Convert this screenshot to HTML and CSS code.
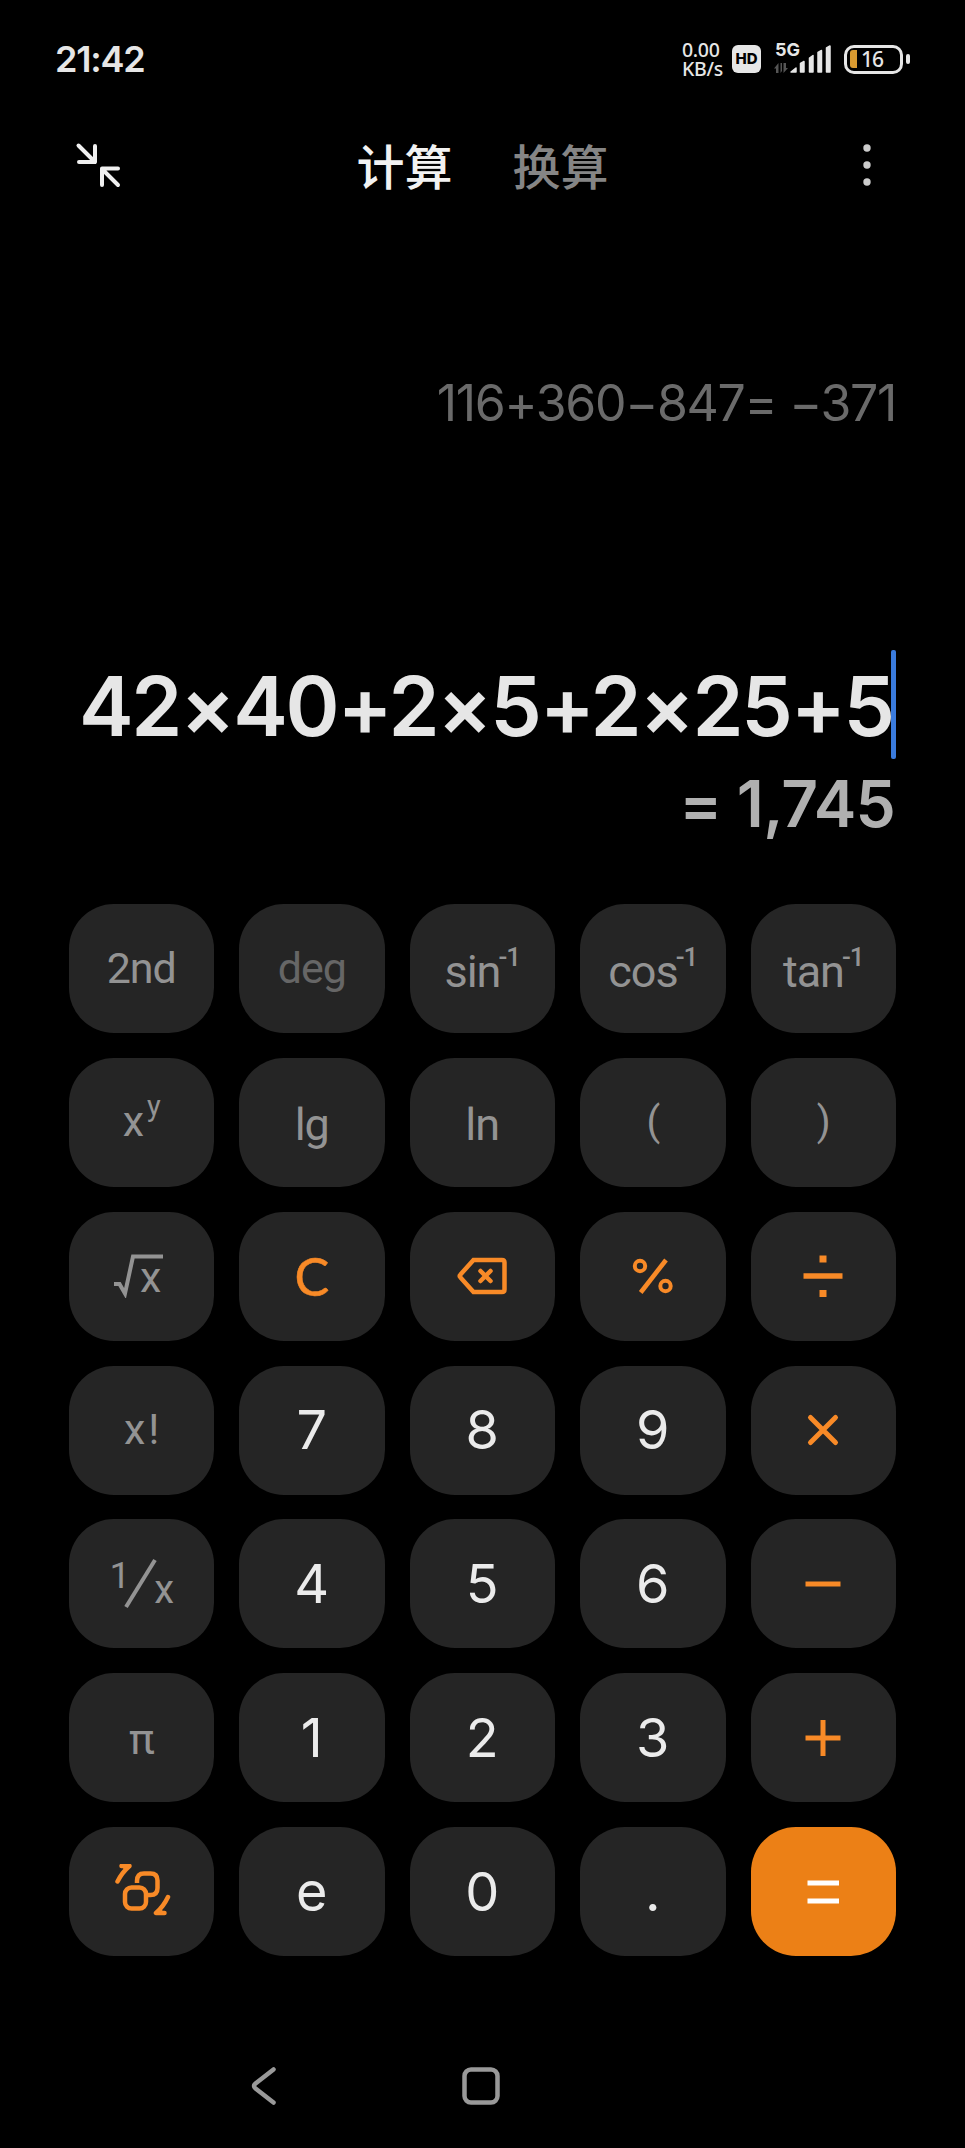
FILE: index.html
```
<!DOCTYPE html>
<html lang="zh-CN">
<head>
    <meta charset="UTF-8">
    <meta name="viewport" content="width=device-width, initial-scale=1.0">
    <title>计算器</title>
    <link rel="stylesheet" href="styles.css">
</head>
<body>
    <div class="status-bar">
        <span class="clock">21:42</span>
        <div class="status-icons">
            <div class="net-speed"><span>0.00</span><span>KB/s</span></div>
            <div class="hd">HD</div>
            <div class="signal">
                <span class="signal-type">5G</span>
                <svg width="60" height="32" viewBox="0 0 60 32">
                    <path d="M4.500 30V20L0 25.500H2V30ZM6.500 20V30L8 28V20ZM9.500 20V30L14 25H12V20Z" fill="#555"/>
                    <path d="M17 29L22 25V29Z M26.500 29V20.500L30 18.500V29Z M35.500 29V15L39 12.500V29Z M44 29V9.500L47.500 7.500V29Z M52.500 29V5L56 3V29Z" fill="#e6e6e6" stroke="#e6e6e6" stroke-width="1.500" stroke-linejoin="round"/>
                </svg>
            </div>
            <div class="battery">
                <div class="battery-body"><i class="battery-level"></i><span>16</span></div>
                <i class="battery-tip"></i>
            </div>
        </div>
    </div>

    <div class="header">
        <svg class="icon-shrink" width="46" height="46" viewBox="0 0 46 46">
            <path d="M3.500 3.500L20 20M20 4V20H4M43 43L27 27M43 26.500H27V43"/>
        </svg>
        <div class="tabs">
            <span class="tab active">计算</span>
            <span class="tab">换算</span>
        </div>
        <svg class="icon-more" width="10" height="46" viewBox="0 0 10 46">
            <circle cx="5" cy="6" r="3.700"/>
            <circle cx="5" cy="23" r="3.700"/>
            <circle cx="5" cy="40" r="3.700"/>
        </svg>
    </div>

    <div class="display">
        <div class="history">116+360−847= −371</div>
        <div class="expression">42×40+2×5+2×25+5<i class="cursor"></i></div>
        <div class="result">= 1,745</div>
    </div>

    <div class="keypad">
        <button class="key fn">2nd</button>
        <button class="key fn dim">deg</button>
        <button class="key fn trig">sin<sup>-1</sup></button>
        <button class="key fn trig">cos<sup>-1</sup></button>
        <button class="key fn trig">tan<sup>-1</sup></button>

        <button class="key fn power">x<sup>y</sup></button>
        <button class="key fn log">lg</button>
        <button class="key fn log">ln</button>
        <button class="key fn paren">(</button>
        <button class="key fn paren">)</button>

        <button class="key fn root">
            <svg width="52" height="44" viewBox="0 0 52 44"><path d="M1 30H6.500L12 39.500L20 2.500H50"/></svg><span>x</span>
        </button>
        <button class="key clear">C</button>
        <button class="key op">
            <svg width="52" height="40" viewBox="0 0 52 40">
                <path d="M17.500 4H46Q48.500 4 48.500 6.500V33.500Q48.500 36 46 36H17.500L4.500 21.500Q3 20 4.500 18.500Z"/>
                <path d="M24.500 15L34.500 25M34.500 15L24.500 25" stroke-linecap="round"/>
            </svg>
        </button>
        <button class="key op" aria-label="%">
            <svg width="44" height="40" viewBox="0 0 44 40">
                <circle cx="9" cy="10" r="5.200" stroke-width="4"/>
                <circle cx="34.500" cy="30" r="5.200" stroke-width="4"/>
                <path d="M9.700 36.500L35 4" stroke-width="4.600"/>
            </svg>
        </button>
        <button class="key op" aria-label="÷">
            <svg width="44" height="46" viewBox="0 0 44 46">
                <path d="M2.500 23H41.500" stroke-width="5.400"/>
                <path d="M18.500 6H25.500M18.500 40.500H25.500" stroke-width="7"/>
            </svg>
        </button>

        <button class="key fn factorial">x!</button>
        <button class="key">7</button>
        <button class="key">8</button>
        <button class="key">9</button>
        <button class="key op" aria-label="×">
            <svg width="44" height="44" viewBox="0 0 44 44"><path d="M9.500 9.500L34.500 34.500M34.500 9.500L9.500 34.500" stroke-width="5" stroke-linecap="round"/></svg>
        </button>

        <button class="key fn inverse">
            <span class="num">1</span><svg width="34" height="52" viewBox="0 0 34 52"><path d="M2 49L31 2"/></svg><span class="den">x</span>
        </button>
        <button class="key">4</button>
        <button class="key">5</button>
        <button class="key">6</button>
        <button class="key op" aria-label="−">
            <svg width="44" height="44" viewBox="0 0 44 44"><path d="M4.500 22H39.500" stroke-width="5"/></svg>
        </button>

        <button class="key fn pi">π</button>
        <button class="key">1</button>
        <button class="key">2</button>
        <button class="key">3</button>
        <button class="key op" aria-label="+">
            <svg width="44" height="44" viewBox="0 0 44 44"><path d="M4.500 22H39.500M22 4V40" stroke-width="5"/></svg>
        </button>

        <button class="key op switch">
            <svg width="60" height="56" viewBox="0 0 60 56">
                <path d="M26 19V17Q26 9.500 33 9.500H39.500Q46.500 9.500 46.500 16.500V24Q46.500 31 39.500 31H36"/>
                <rect x="14" y="23.500" width="21" height="21" rx="6.500"/>
                <path d="M10.500 2H18.500Q11 8.500 6.500 17.500M18 2.500L14.500 4.500M57 33Q52.500 42.500 45 49H53.500M45.500 48.500L49 46" stroke-linecap="round" stroke-linejoin="round"/>
            </svg>
        </button>
        <button class="key">e</button>
        <button class="key">0</button>
        <button class="key">.</button>
        <button class="key equals" aria-label="=">
            <svg width="44" height="44" viewBox="0 0 44 44"><path d="M6.500 13H38M6.500 31H38" stroke-width="5.200"/></svg>
        </button>
    </div>

    <div class="nav-bar">
        <svg width="30" height="42" viewBox="0 0 30 42"><path d="M23.500 4.500L5.500 18.500Q2.500 21 5.500 23.500L23.500 37.500"/></svg>
        <svg width="42" height="42" viewBox="0 0 42 42"><rect x="4.500" y="4.500" width="33" height="33" rx="6.500"/></svg>
    </div>
</body>
</html>
```

FILE: styles.css
```
* {
    box-sizing: border-box;
}
body {
    margin: 0;
    width: 965px;
    height: 2148px;
    overflow: hidden;
    background: #000;
    color: #e6e6e6;
    font-family: Inter, "Noto Sans CJK SC", sans-serif;
    display: flex;
    flex-direction: column;
}
svg {
    display: block;
    flex: none;
    fill: none;
}

/* status bar */
.status-bar {
    height: 118px;
    padding: 0 55px 0 55px;
    display: flex;
    align-items: center;
    justify-content: space-between;
}
.clock {
    font-size: 36px;
    font-weight: 600;
    letter-spacing: -1.2px;
}
.status-icons {
    display: flex;
    align-items: center;
}
.net-speed {
    width: 50px;
    display: flex;
    flex-direction: column;
    font-family: "Noto Sans", sans-serif;
    font-size: 19.500px;
    font-weight: 500;
    line-height: 19px;
    letter-spacing: -0.3px;
}
.hd {
    width: 29px;
    height: 28px;
    border-radius: 6px;
    background: #e6e6e6;
    color: #000;
    font-size: 15px;
    font-weight: 800;
    line-height: 28px;
    text-align: center;
}
.signal {
    position: relative;
    margin-left: 13px;
}
.signal-type {
    position: absolute;
    left: 1px;
    top: -3px;
    font-size: 18px;
    font-weight: 700;
    line-height: 20px;
}
.battery {
    display: flex;
    align-items: center;
    gap: 3px;
    margin-left: 10px;
}
.battery-body {
    width: 59px;
    height: 29px;
    border: 3px solid #e6e6e6;
    border-radius: 10px;
    display: flex;
    align-items: center;
    padding-left: 3px;
    font-family: "Noto Sans", sans-serif;
    font-size: 21px;
    font-weight: 500;
    line-height: 20px;
    letter-spacing: -1px;
}
.battery-level {
    width: 7px;
    height: 18px;
    margin-right: 4px;
    border-radius: 3px 0 0 3px;
    background: #d99a30;
}
.battery-tip {
    width: 4px;
    height: 10px;
    border-radius: 2px;
    background: #e6e6e6;
}

/* header */
.header {
    height: 94px;
    padding: 0 93px 0 75px;
    display: flex;
    align-items: center;
    justify-content: space-between;
}
.icon-shrink {
    stroke: #f0f0f0;
    stroke-width: 4;
    stroke-linecap: round;
    stroke-linejoin: round;
}
.icon-more {
    fill: #ccc;
}
.tabs {
    display: flex;
    gap: 60px;
    margin-right: 18px;
    padding-bottom: 3px;
}
.tab {
    font-family: "Noto Sans CJK SC", sans-serif;
    font-size: 48px;
    font-weight: 500;
    line-height: 60px;
    color: #858585;
}
.tab.active {
    color: #f2f2f2;
}

/* display */
.display {
    height: 692px;
    padding: 160px 69px 0;
    text-align: right;
    white-space: nowrap;
}
.history {
    height: 62px;
    line-height: 62px;
    font-size: 50px;
    letter-spacing: -1.300px;
    color: #6a6a6a;
}
.expression {
    position: relative;
    height: 110px;
    margin-top: 217px;
    padding-right: 3px;
    line-height: 112px;
    font-size: 82px;
    font-weight: 600;
    letter-spacing: -2.200px;
}
.cursor {
    position: absolute;
    right: 0;
    top: -1px;
    width: 5px;
    height: 109px;
    border-radius: 2px;
    background: #3a7bdd;
    z-index: -1;
}
.result {
    height: 80px;
    margin-top: 2px;
    padding-right: 1px;
    line-height: 81px;
    font-size: 64px;
    font-weight: 600;
    letter-spacing: -0.8px;
    color: #b0b0b0;
}

/* keypad */
.keypad {
    padding: 0 69px 0 68.500px;
    display: grid;
    grid-template-columns: repeat(5, 1fr);
    grid-auto-rows: 129px;
    gap: 24.850px 25px;
}
.key {
    border: none;
    padding: 0;
    border-radius: 45px;
    background: #252525;
    color: #ebebeb;
    font-family: Inter, sans-serif;
    font-size: 54px;
    font-weight: 400;
    line-height: 1;
    display: flex;
    align-items: center;
    justify-content: center;
}
.fn {
    color: #939393;
    font-family: Roboto, sans-serif;
    font-size: 43px;
    font-weight: 400;
    letter-spacing: -1px;
}
.fn svg {
    stroke: #939393;
    stroke-width: 4;
}
.fn sup {
    font-size: 26px;
    font-weight: 500;
    line-height: 1;
}
.dim {
    color: #666;
}
.trig {
    font-size: 45px;
    padding-top: 6px;
}
.trig sup {
    margin: 0 0 30px -2px;
}
.power {
    padding-bottom: 2px;
}
.power sup {
    font-size: 29px;
    font-weight: 400;
    margin: 0 0 30px 4px;
}
.log {
    font-size: 45px;
    padding-top: 4px;
}
.paren {
    font-size: 40px;
}
.root {
    padding-right: 9px;
}
.root svg {
    margin-right: -25px;
}
.root span {
    padding-top: 2px;
}
.factorial {
    padding-left: 4px;
    padding-bottom: 2px;
    letter-spacing: 3px;
}
.inverse .num {
    font-size: 37px;
    margin: 0 -5px 16px 0;
}
.inverse .den {
    font-size: 40px;
    margin: 12px 0 0 -4px;
}
.pi {
    padding-top: 4px;
}
.clear {
    color: #f88a27;
    font-family: Lato, sans-serif;
    font-size: 52px;
    -webkit-text-stroke: 0.5px #f88a27;
}
.op svg {
    stroke: #f88a27;
    stroke-width: 4.500;
}
.equals {
    background: #ec8016;
}
.equals svg {
    stroke: #fff;
}

/* navigation */
.nav-bar {
    margin-top: 109px;
    padding-left: 250px;
    display: flex;
    gap: 180px;
    stroke: #999;
    stroke-width: 4.500;
    stroke-linecap: round;
    stroke-linejoin: round;
}
```
